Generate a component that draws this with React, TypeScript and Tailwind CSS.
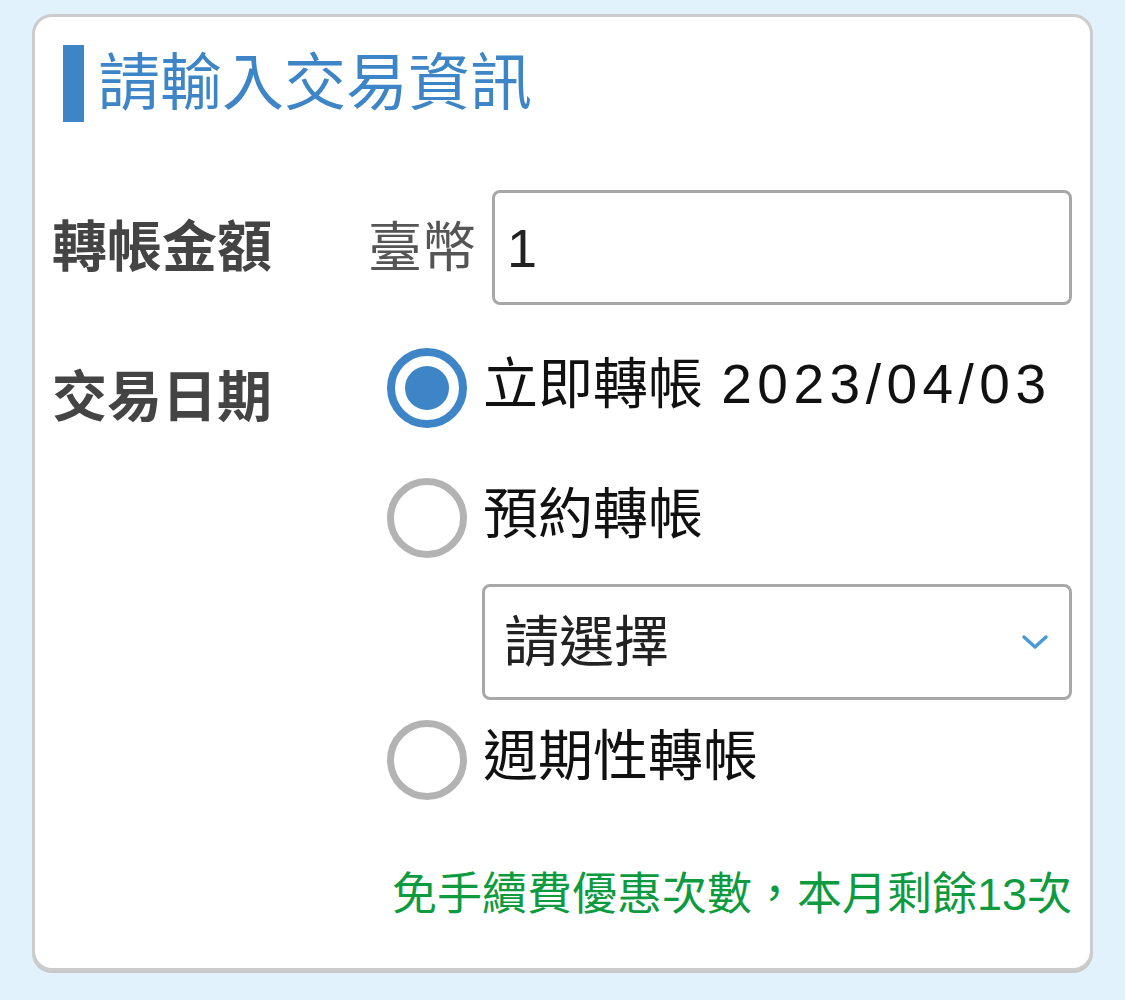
const cjk = "font-['Liberation_Sans','Noto_Sans_CJK_TC',sans-serif]"

function Radio({ checked }: { checked?: boolean }) {
  if (checked) {
    return (
      <span className="flex h-[80px] w-[80px] shrink-0 items-center justify-center rounded-full border-[8px] border-[#3d85c6] bg-white">
        <span className="h-[44px] w-[44px] rounded-full bg-[#3d85c6]" />
      </span>
    )
  }
  return <span className="h-[80px] w-[80px] shrink-0 rounded-full border-[7px] border-[#b3b3b3] bg-white" />
}

function RadioRow({ checked, children, className = '' }: { checked?: boolean; children: React.ReactNode; className?: string }) {
  return (
    <label className={`flex h-[80px] items-center gap-[16px] ${className}`}>
      <Radio checked={checked} />
      <span className="pb-[8px] text-[55px] leading-none text-[#111]">{children}</span>
    </label>
  )
}

export default function App() {
  return (
    <div className={`min-h-screen bg-[#e2f2fd] pl-[32px] pt-[14px] ${cjk}`}>
      <div className="h-[957px] w-[1061px] rounded-[20px] border-[3px] border-[#cccccc] bg-white pl-[17px] pr-[18px] pt-[28px] shadow-[0_2px_0_#c8c8c8]">
        <div className="ml-[11px] flex h-[77px] items-center">
          <span className="h-[77px] w-[21px] bg-[#3d85c6]" />
          <h2 className="ml-[14px] text-[62px] leading-none text-[#3d85c6]">請輸入交易資訊</h2>
        </div>

        <div className="mt-[68px] flex h-[115px] items-center">
          <div className="w-[316px] text-[55px] font-bold leading-none text-[#444]">轉帳金額</div>
          <div className="w-[124px] text-[54px] leading-none text-[#555]">臺幣</div>
          <div className="flex h-[115px] flex-1 items-center rounded-[8px] border-[3px] border-[#a8a8a8] pl-[12px] text-[54px] leading-none text-[#222]">
            1
          </div>
        </div>

        <div className="mt-[43px] flex">
          <div className="w-[335px] pt-[22px] text-[55px] font-bold leading-none text-[#444]">交易日期</div>
          <div className="flex flex-1 flex-col">
            <RadioRow checked>
              立即轉帳 <span className="ml-[3px] tracking-[5.5px]">2023/04/03</span>
            </RadioRow>
            <RadioRow className="mt-[50px]">預約轉帳</RadioRow>
            <div className="ml-[95px] mt-[26px] flex h-[116px] items-center justify-between rounded-[8px] border-[3px] border-[#a8a8a8] pl-[19px] pr-[20px]">
              <span className="text-[55px] leading-none text-[#222]">請選擇</span>
              <svg width="28" height="18" viewBox="0 0 28 18" fill="none">
                <path d="M3 4l11 10L25 4" stroke="#4a9ad6" strokeWidth="3.5" strokeLinecap="round" strokeLinejoin="round" />
              </svg>
            </div>
            <RadioRow className="mt-[20px]">週期性轉帳</RadioRow>
          </div>
        </div>

        <p className="mt-[72px] text-right text-[45px] leading-none text-[#0e9b3f]">免手續費優惠次數，本月剩餘13次</p>
      </div>
    </div>
  )
}
